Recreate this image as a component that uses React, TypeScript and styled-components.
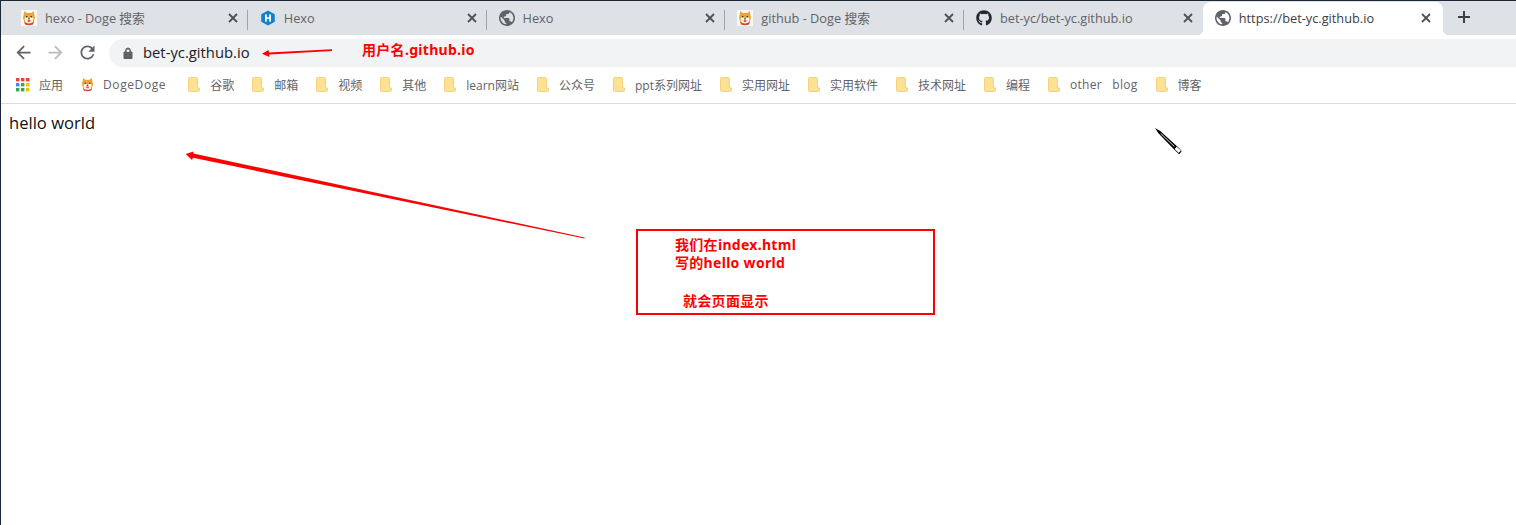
import React from "react";
import styled, { createGlobalStyle } from "styled-components";
import { FaGithub } from "react-icons/fa";

const UI_FONT = `"Open Sans", "Noto Sans", "Noto Sans CJK SC", sans-serif`;
const MARK_FONT = `"Noto Sans", "Noto Sans CJK SC", sans-serif`;

const Global = createGlobalStyle`
  html, body { margin: 0; padding: 0; background: #fff; overflow: hidden; }
`;

const Windowed = styled.div`
  position: relative;
  width: 1516px;
  height: 525px;
  box-sizing: border-box;
  border-left: 1px solid #1b2838;
  border-top: 1px solid #1b2838;
  display: flex;
  flex-direction: column;
  font-family: ${UI_FONT};
  background: #fff;
  overflow: hidden;
`;

const TabStrip = styled.div`
  height: 34px;
  background: #dee1e6;
  display: flex;
  align-items: flex-end;
  padding-left: 8px;
  flex: none;
`;

const Tab = styled.div<{ $active?: boolean; $sep?: boolean }>`
  position: relative;
  flex: none;
  width: ${(p) => (p.$active ? "240px" : "238.75px")};
  height: 33px;
  box-sizing: border-box;
  display: flex;
  align-items: center;
  padding: 0 ${(p) => (p.$active ? "11px" : "9px")} 2px 12px;
  color: ${(p) => (p.$active ? "#3c4043" : "#5f6368")};
  background: ${(p) => (p.$active ? "#fff" : "transparent")};
  border-radius: ${(p) => (p.$active ? "8px 8px 0 0" : "0")};
  ${(p) =>
    p.$sep
      ? `&::after { content: ""; position: absolute; right: 0; top: 8px; width: 1px; height: 20px; background: #a0a3a8; }`
      : ""}
  ${(p) =>
    p.$active
      ? `&::before { content: ""; position: absolute; left: -6px; bottom: 0; width: 6px; height: 6px; background: radial-gradient(circle at 0 0, transparent 6px, #fff 6.5px); }
         &::after { content: ""; position: absolute; right: -6px; bottom: 0; width: 6px; height: 6px; background: radial-gradient(circle at 100% 0, transparent 6px, #fff 6.5px); }`
      : ""}
`;

const TabIcon = styled.span`
  width: 16px;
  height: 16px;
  flex: none;
  display: flex;
  color: #24292e;
`;

const TabTitle = styled.span`
  flex: 1;
  margin-left: 8px;
  font-size: 12.75px;
  white-space: nowrap;
`;

const CloseGlyph = styled.svg`
  width: 12px;
  height: 12px;
  flex: none;
`;

const NewTab = styled.svg`
  width: 14px;
  height: 14px;
  margin: 0 0 11px 14px;
  flex: none;
`;

const Toolbar = styled.div`
  height: 33px;
  flex: none;
  background: #fff;
  display: flex;
  align-items: flex-start;
  padding: 4px 0 0 12px;
  box-sizing: border-box;
`;

const NavIcon = styled.svg`
  width: 21px;
  height: 21px;
  flex: none;
  margin: 3px 11px 0 0;
`;

const Omnibox = styled.div`
  flex: 1;
  height: 28px;
  background: #f1f3f4;
  border-radius: 14px 0 0 14px;
  display: flex;
  align-items: center;
  padding-left: 13px;
  margin-right: -20px;
`;

const Lock = styled.svg`
  width: 12px;
  height: 12px;
  flex: none;
`;

const Address = styled.span`
  margin-left: 9px;
  padding-bottom: 2px;
  font-size: 14.8px;
  color: #202124;
  white-space: nowrap;
`;

const Bookmarks = styled.div`
  height: 36px;
  flex: none;
  box-sizing: border-box;
  border-bottom: 1px solid #dadce0;
  display: flex;
  align-items: center;
  padding: 0 0 2px 15px;
  font-size: 12px;
  color: #5f6368;
`;

const Bookmark = styled.div<{ $gap?: number; $after?: number; $tracking?: number }>`
  display: flex;
  align-items: center;
  gap: ${(p) => p.$gap ?? 10}px;
  margin-right: ${(p) => p.$after ?? 18}px;
  letter-spacing: ${(p) => p.$tracking ?? 0}px;
  white-space: pre;
`;

const FolderIcon = styled.svg`
  width: 12px;
  height: 15px;
  flex: none;
`;

const Page = styled.main`
  flex: 1;
  padding: 8px 8px;
  font-size: 16.6px;
  line-height: 22px;
  color: #111;
`;

const Overlay = styled.svg`
  position: absolute;
  left: -1px;
  top: -1px;
  width: 1516px;
  height: 525px;
  pointer-events: none;
`;

const UserNote = styled.div`
  position: absolute;
  left: 361px;
  top: 40px;
  font: 700 14px/18px ${MARK_FONT};
  letter-spacing: 0.3px;
  color: #f00;
  white-space: nowrap;
`;

const NoteBox = styled.div`
  position: absolute;
  left: 635px;
  top: 228px;
  width: 299px;
  height: 86px;
  box-sizing: border-box;
  border: 2px solid #f00;
  padding: 5px 0 0 37px;
  font: 700 14px/18px ${MARK_FONT};
  color: #f00;
`;

const NoteLine = styled.div<{ $top?: number; $indent?: number }>`
  margin-top: ${(p) => p.$top ?? 0}px;
  margin-left: ${(p) => p.$indent ?? 0}px;
  white-space: nowrap;
  letter-spacing: 0.3px;
`;

const Doge = ({ size = 16, plain }: { size?: number; plain?: boolean }) => (
  <svg width={size} height={size} viewBox="0 0 16 16" style={{ flex: "none" }}>
    {!plain && <rect width="16" height="16" fill="#fdf8f0" />}
    <path d="M3.4 1 L5.6 3 L10.4 3 L12.6 1 L14 8 L12.4 12.5 L3.6 12.5 L2 8 Z" fill="#e9a33f" />
    <path d="M3.6 8.2 Q5.5 6.4 8 8 Q10.5 6.4 12.4 8.2 L11.6 12.8 L4.4 12.8 Z" fill="#fff6e6" />
    <rect x="5" y="6" width="1.3" height="1.3" fill="#3a2a1a" />
    <rect x="9.7" y="6" width="1.3" height="1.3" fill="#3a2a1a" />
    <rect x="7.2" y="8.2" width="1.6" height="1.2" fill="#3a2a1a" />
    <path d="M6.6 10 H9.4 V11.6 Q8 12.6 6.6 11.6 Z" fill="#e4573f" />
    <path d="M3 11.6 Q8 15.6 13 11.6 L12 14.4 Q8 16 4 14.4 Z" fill="#d9402f" />
  </svg>
);

const HexoLogo = () => (
  <svg width="16" height="16" viewBox="0 0 16 16">
    <path d="M8 0.4 L14.8 4.2 V11.8 L8 15.6 L1.2 11.8 V4.2 Z" fill="#0e83cd" />
    <rect x="5" y="4.4" width="1.8" height="7.2" fill="#fff" />
    <rect x="9.2" y="4.4" width="1.8" height="7.2" fill="#fff" />
    <rect x="5" y="7.2" width="6" height="1.6" fill="#fff" />
  </svg>
);

const Globe = () => (
  <svg width="16" height="16" viewBox="2 2 20 20" fill="#5f6368">
    <path d="M12 2C6.48 2 2 6.48 2 12s4.48 10 10 10 10-4.48 10-10S17.52 2 12 2zm-1 17.93c-3.95-.49-7-3.85-7-7.93 0-.62.08-1.21.21-1.79L9 15v1c0 1.1.9 2 2 2v1.93zm6.9-2.54c-.26-.81-1-1.39-1.9-1.39h-1v-3c0-.55-.45-1-1-1H8v-2h2c.55 0 1-.45 1-1V7h2c1.1 0 2-.9 2-2v-.41c2.93 1.19 5 4.06 5 7.41 0 2.08-.8 3.97-2.1 5.39z" />
  </svg>
);

const Close = () => (
  <CloseGlyph viewBox="0 0 12 12">
    <path d="M2 2 L10 10 M10 2 L2 10" stroke="#4d5156" strokeWidth="1.8" fill="none" />
  </CloseGlyph>
);

const Folder = () => (
  <FolderIcon viewBox="0 0 12 15">
    <path d="M0.5 1.5 Q0.5 0.5 1.5 0.5 H8.5 Q9.5 0.5 9.5 1.5 V11 H11.5 V13.5 Q11.5 14.5 10.5 14.5 H1.5 Q0.5 14.5 0.5 13.5 Z" fill="#fde293" stroke="#f4d27e" />
  </FolderIcon>
);

const AppsGrid = () => {
  const colors = ["#ea4335", "#ea4335", "#ea4335", "#4285f4", "#34a853", "#fbbc04", "#34a853", "#34a853", "#fbbc04"];
  return (
    <svg width="14" height="14" viewBox="0 0 14 14" style={{ flex: "none" }}>
      {colors.map((c, i) => (
        <rect key={i} x={(i % 3) * 5} y={Math.floor(i / 3) * 5} width="3.4" height="3.4" fill={c} />
      ))}
    </svg>
  );
};

const tabs: { title: string; icon: React.ReactNode }[] = [
  { title: "hexo - Doge 搜索", icon: <Doge /> },
  { title: "Hexo", icon: <HexoLogo /> },
  { title: "Hexo", icon: <Globe /> },
  { title: "github - Doge 搜索", icon: <Doge /> },
  { title: "bet-yc/bet-yc.github.io", icon: <FaGithub size={16} /> },
  { title: "https://bet-yc.github.io", icon: <Globe /> },
];

const folders = [
  "谷歌", "邮箱", "视频", "其他", "learn网站", "公众号", "ppt系列网址", "实用网址",
  "实用软件", "技术网址", "编程", "other   blog", "博客",
];

export default function App() {
  return (
    <Windowed>
      <Global />
      <TabStrip>
        {tabs.map((t, i) => (
          <Tab key={i} $active={i === 5} $sep={i < 4}>
            <TabIcon>{t.icon}</TabIcon>
            <TabTitle>{t.title}</TabTitle>
            <Close />
          </Tab>
        ))}
        <NewTab viewBox="0 0 14 14">
          <path d="M7 1 V13 M1 7 H13" stroke="#3c4043" strokeWidth="2" fill="none" />
        </NewTab>
      </TabStrip>
      <Toolbar>
        <NavIcon viewBox="0 0 24 24" fill="#5f6368">
          <path d="M20 11H7.83l5.59-5.59L12 4l-8 8 8 8 1.41-1.41L7.83 13H20v-2z" />
        </NavIcon>
        <NavIcon viewBox="0 0 24 24" fill="#b8babd">
          <path d="M4 11h12.17l-5.59-5.59L12 4l8 8-8 8-1.41-1.41L16.17 13H4v-2z" />
        </NavIcon>
        <NavIcon viewBox="0 0 24 24" fill="#5f6368">
          <path d="M17.65 6.35C16.2 4.9 14.21 4 12 4c-4.42 0-7.99 3.58-7.99 8s3.57 8 7.99 8c3.73 0 6.84-2.55 7.73-6h-2.08c-.82 2.33-3.04 4-5.65 4-3.31 0-6-2.69-6-6s2.69-6 6-6c1.66 0 3.14.69 4.22 1.78L13 11h7V4l-2.35 2.35z" />
        </NavIcon>
        <Omnibox>
          <Lock viewBox="0 0 12 12">
            <path d="M2 5 H10 V11.5 H2 Z M3.6 5 V3.4 A2.4 2.4 0 0 1 8.4 3.4 V5" fill="#5f6368" stroke="#5f6368" />
            <rect x="4.7" y="2.6" width="2.6" height="2.4" fill="#f1f3f4" />
          </Lock>
          <Address>bet-yc.github.io</Address>
        </Omnibox>
      </Toolbar>
      <Bookmarks>
        <Bookmark $gap={9} $after={17}>
          <AppsGrid />
          <span>应用</span>
        </Bookmark>
        <Bookmark $gap={8} $after={22}>
          <Doge size={15} plain />
          <Bookmark $after={0} $tracking={0.6}>DogeDoge</Bookmark>
        </Bookmark>
        {folders.map((f) => (
          <Bookmark key={f} $tracking={f.startsWith("other") ? 0.3 : 0}>
            <Folder />
            <span>{f}</span>
          </Bookmark>
        ))}
      </Bookmarks>
      <Page>hello world</Page>

      <Overlay viewBox="0 0 1516 525">
        <path d="M332 49.2 L332 51 L269 54.6 L269.5 57 L262 53.7 L268.5 50 L269 52.4 Z" fill="#f00" />
        <path d="M584.5 237.4 L584.5 238.6 L193 157.8 L192 160 L185.7 154 L193.5 151.5 L193.3 153.6 Z" fill="#f00" />
        <g transform="translate(1155 128) rotate(42)">
          <path d="M0 0 L6 -1.2 L30 -1.2 Q35 -1.4 35.5 0 L35.5 3.4 L30 3.2 L6 1.6 Z" fill="#000" />
          <path d="M29 -0.3 H34 V2.2 H29 Z M8 0.2 L27 0.8" fill="#fff" stroke="#fff" strokeWidth="0.8" />
        </g>
      </Overlay>
      <UserNote>用户名.github.io</UserNote>
      <NoteBox>
        <NoteLine>我们在index.html</NoteLine>
        <NoteLine>写的hello world</NoteLine>
        <NoteLine $top={20} $indent={8}>就会页面显示</NoteLine>
      </NoteBox>
    </Windowed>
  );
}
